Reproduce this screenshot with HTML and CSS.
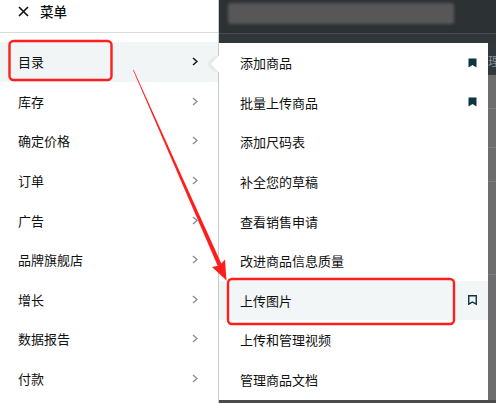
FILE: index.html
```html
<!DOCTYPE html>
<html lang="zh">
<head>
  <meta charset="UTF-8">
  <title>菜单</title>
  <link rel="stylesheet" href="styles.css">
</head>
<body>

<div class="page">
  <div class="nav">
    <div class="nav-head">
      <svg class="close" width="11" height="11" viewBox="0 0 11 11"><path d="M1 1 L10 10 M10 1 L1 10" stroke="#0f1111" stroke-width="1.6" fill="none"/></svg>
      <span>菜单</span>
    </div>
    <ul class="nav-list">
      <li class="active">目录<svg class="chev" width="6" height="9" viewBox="0 0 6 9"><path d="M1 1 L5 4.5 L1 8" fill="none" stroke-width="1.5"/></svg></li>
      <li>库存<svg class="chev" width="6" height="9" viewBox="0 0 6 9"><path d="M1 1 L5 4.5 L1 8" fill="none" stroke-width="1.5"/></svg></li>
      <li>确定价格<svg class="chev" width="6" height="9" viewBox="0 0 6 9"><path d="M1 1 L5 4.5 L1 8" fill="none" stroke-width="1.5"/></svg></li>
      <li>订单<svg class="chev" width="6" height="9" viewBox="0 0 6 9"><path d="M1 1 L5 4.5 L1 8" fill="none" stroke-width="1.5"/></svg></li>
      <li>广告<svg class="chev" width="6" height="9" viewBox="0 0 6 9"><path d="M1 1 L5 4.5 L1 8" fill="none" stroke-width="1.5"/></svg></li>
      <li>品牌旗舰店<svg class="chev" width="6" height="9" viewBox="0 0 6 9"><path d="M1 1 L5 4.5 L1 8" fill="none" stroke-width="1.5"/></svg></li>
      <li>增长<svg class="chev" width="6" height="9" viewBox="0 0 6 9"><path d="M1 1 L5 4.5 L1 8" fill="none" stroke-width="1.5"/></svg></li>
      <li>数据报告<svg class="chev" width="6" height="9" viewBox="0 0 6 9"><path d="M1 1 L5 4.5 L1 8" fill="none" stroke-width="1.5"/></svg></li>
      <li>付款<svg class="chev" width="6" height="9" viewBox="0 0 6 9"><path d="M1 1 L5 4.5 L1 8" fill="none" stroke-width="1.5"/></svg></li>
    </ul>
  </div>

  <div class="backdrop">
    <div class="topbar">
      <div class="blur-box"></div>
    </div>
    <div class="lower">
      <div class="submenu">
        <div class="notch"></div>
        <ul class="sub-list">
          <li>添加商品<svg class="mark" width="9" height="10" viewBox="0 0 9 10"><path d="M0.5 0.5 H8.5 V9.5 L4.5 7 L0.5 9.5 Z"/></svg></li>
          <li>批量上传商品<svg class="mark" width="9" height="10" viewBox="0 0 9 10"><path d="M0.5 0.5 H8.5 V9.5 L4.5 7 L0.5 9.5 Z"/></svg></li>
          <li>添加尺码表</li>
          <li>补全您的草稿</li>
          <li>查看销售申请</li>
          <li>改进商品信息质量</li>
          <li class="active">上传图片<svg class="mark outline" width="9" height="10" viewBox="0 0 9 10"><path d="M0.75 0.75 H8.25 V9.2 L4.5 7 L0.75 9.2 Z"/></svg></li>
          <li>上传和管理视频</li>
          <li>管理商品文档</li>
        </ul>
      </div>
      <div class="strip">
        <div class="strip-dark">理</div>
        <div class="strip-row"></div>
        <div class="strip-row short"></div>
        <div class="strip-row"></div>
        <div class="strip-row tall"></div>
      </div>
    </div>
  </div>

  <svg class="marks" width="496" height="403" viewBox="0 0 496 403">
    <rect x="9.5" y="41" width="102" height="39" rx="4" fill="none" stroke="#ff1e1e" stroke-width="2.4"/>
    <rect x="228" y="279" width="226" height="45" rx="4" fill="none" stroke="#ff1e1e" stroke-width="2.4"/>
    <polygon points="133,70 133.6,69.8 222.6,266.2 218.6,268" fill="#ff1e1e"/>
    <polygon points="226.5,280.5 212,267 219.5,265.5 225,259.5" fill="#ff1e1e"/>
  </svg>
</div>

</body>
</html>
```

FILE: styles.css
```css
body {
  margin: 0;
  font-family: "Noto Sans CJK SC", "Noto Sans", sans-serif;
  font-size: 13px;
  color: #0f1111;
}
.page {
  position: relative;
  width: 496px;
  height: 403px;
  display: flex;
  overflow: hidden;
  background: #4b4b4b;
}
ul { list-style: none; margin: 0; padding: 0; }

.nav {
  width: 218px;
  flex: none;
  background: #fff;
  border-right: 1px solid #c9cccc;
}
.nav-head {
  height: 33px;
  display: flex;
  align-items: center;
  gap: 11px;
  padding: 0 0 0 18px;
  border-bottom: 1px solid #d8dbdb;
  box-sizing: border-box;
  font-size: 13.5px;
  font-weight: 500;
}
.nav-head span { margin-top: -10px; }
.close { margin-top: -9px; }
.nav-list { padding-top: 9px; }
.nav-list li {
  height: 39.6px;
  display: flex;
  align-items: center;
  justify-content: space-between;
  padding: 0 20px 0 18px;
}
.nav-list li.active { background: #f2f5f5; }
.chev { stroke: #8d9194; }
.nav-list li.active .chev { stroke: #0f1111; }

.backdrop {
  flex: 1;
  display: flex;
  flex-direction: column;
  background: #4b4b4b;
}
.topbar {
  height: 43px;
  flex: none;
  background: #2c3234;
  box-shadow: inset 0 -9px 0 #30373a, inset 0 -10px 0 #474d50;
  padding: 3px 0 0 9px;
  box-sizing: border-box;
}
.blur-box {
  width: 226px;
  height: 21px;
  background: #575757;
  filter: blur(1.5px);
  border-radius: 3px;
}
.lower {
  display: flex;
  height: 357px;
}
.submenu {
  position: relative;
  width: 269px;
  background: #fff;
}
.notch {
  position: absolute;
  left: -6px;
  top: 15px;
  width: 12px;
  height: 12px;
  background: #fff;
  transform: rotate(45deg);
  box-shadow: -2px 2px 3px rgba(0, 0, 0, 0.08);
}
.sub-list { position: relative; }
.sub-list li {
  height: 39.6px;
  display: flex;
  align-items: center;
  justify-content: space-between;
  padding: 0 11px 0 21px;
}
.sub-list li.active { background: #f2f6f6; }
.mark { fill: #0d3440; }
.mark.outline { fill: none; stroke: #0d3440; stroke-width: 1.4; }

.strip {
  flex: 1;
  background: #6d6d6d;
  display: flex;
  flex-direction: column;
}
.strip-dark {
  height: 32px;
  background: #30383b;
  color: #8a8f91;
  font-size: 12px;
  padding: 9px 0 0 0;
  box-sizing: border-box;
}
.strip-row {
  height: 33px;
  border-bottom: 1px solid #808080;
}
.strip-row.short { height: 38px; }
.strip-row.tall { height: 92px; }

.marks {
  position: absolute;
  left: 0;
  top: 0;
  pointer-events: none;
}
```
